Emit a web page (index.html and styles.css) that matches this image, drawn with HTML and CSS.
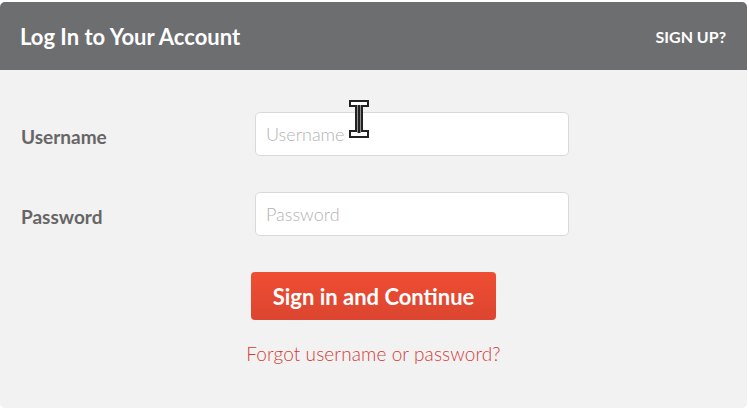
FILE: index.html
```html
<!DOCTYPE html>
<html lang="en">
<head>
    <meta charset="UTF-8">
    <meta name="viewport" content="width=device-width, initial-scale=1.0">
    <title>Log In to Your Account</title>
    <link rel="stylesheet" href="styles.css">
</head>
<body>
    <div class="card">
        <div class="card-header">
            <h1>Log In to Your Account</h1>
            <a href="#" class="signup">Sign up?</a>
        </div>
        <form class="card-body" id="login-form">
            <div class="row">
                <label for="username">Username</label>
                <input type="text" id="username" placeholder="Username">
            </div>
            <div class="row">
                <label for="password">Password</label>
                <input type="password" id="password" placeholder="Password">
            </div>
            <button type="submit">Sign in and Continue</button>
            <a href="#" class="forgot">Forgot username or password?</a>
        </form>
        <svg class="cursor" width="22" height="40" viewBox="0 0 22 40">
            <path d="M2 2h18v5h-6v25h6v6H2v-6h6V7H2z" fill="#fff" stroke="#222" stroke-width="2"/>
            <path d="M11 6v28" stroke="#222" stroke-width="3"/>
        </svg>
    </div>
</body>
</html>
```

FILE: styles.css
```css
body {
    margin: 0;
    padding: 2px 2px 0 0;
    background: #fff;
    font-family: Lato, "Open Sans", sans-serif;
}
.card {
    position: relative;
    width: 747px;
    height: 406px;
    background: #f2f2f2;
    border-radius: 5px;
    overflow: hidden;
}
.card-header {
    height: 68px;
    background: #6d6e70;
    display: flex;
    align-items: center;
    justify-content: space-between;
    padding: 0 21px 0 20px;
}
.card-header h1 {
    margin: 0;
    color: #fff;
    font-size: 22px;
    font-weight: 700;
}
.signup {
    color: #fff;
    font-size: 16px;
    font-weight: 700;
    text-transform: uppercase;
    text-decoration: none;
}
.card-body {
    display: flex;
    flex-direction: column;
    align-items: center;
    padding-top: 42px;
}
.row {
    align-self: stretch;
    display: grid;
    grid-template-columns: 234px 314px;
    align-items: center;
    padding-left: 21px;
    margin-bottom: 36px;
}
.row label {
    color: #666;
    font-size: 19px;
    font-weight: 700;
    padding-top: 4px;
}
.row input {
    box-sizing: border-box;
    height: 44px;
    padding: 0 10px;
    border: 1px solid #d9d9d9;
    border-radius: 5px;
    background: #fff;
    font-family: inherit;
    font-size: 18px;
    font-weight: 300;
    color: #333;
}
.row input::placeholder {
    color: #b3b3b3;
}
button {
    width: 245px;
    height: 48px;
    border: none;
    border-radius: 4px;
    background: linear-gradient(#ef4d32, #dc4530);
    color: #fff;
    font-family: inherit;
    font-size: 22px;
    font-weight: 700;
}
.forgot {
    margin-top: 22px;
    color: #d23c36;
    font-size: 19px;
    font-weight: 300;
    letter-spacing: 0.1px;
    text-decoration: none;
}
.cursor {
    position: absolute;
    left: 348px;
    top: 97px;
}
```
